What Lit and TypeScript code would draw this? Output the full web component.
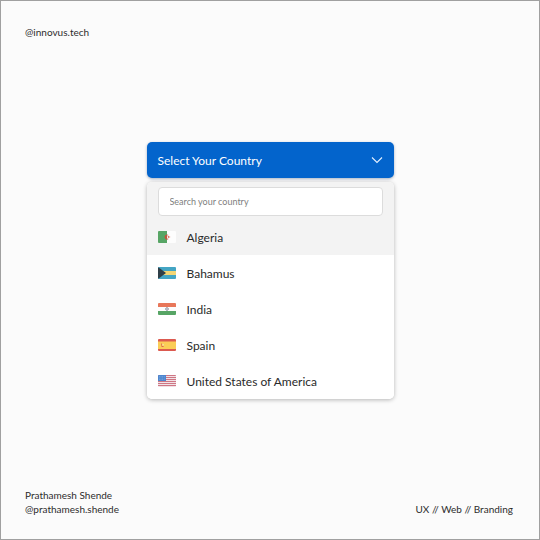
import { LitElement, html, svg, css, nothing } from "lit";
import { customElement, state } from "lit/decorators.js";
import { classMap } from "lit/directives/class-map.js";

const stripes = [0, 2, 4, 6, 8, 10];

const flags = {
  dz: svg`
    <rect width="9" height="12" fill="#57a565"/>
    <rect x="9" width="9" height="12" fill="#fdfdfd"/>
    <path d="M10.6 4A2.5 2.5 0 1 0 10.6 8A2 2 0 1 1 10.6 4Z" fill="#c8503c"/>
    <path d="M12.6 6L11 6.5L10.5 7.6L10.2 6.3L9 6L10.2 5.6L10.5 4.4L11 5.5Z" fill="#d8523e"/>`,
  bs: svg`
    <rect width="18" height="12" fill="#43a5c4"/>
    <rect y="4" width="18" height="4" fill="#f3d675"/>
    <path d="M0 0L8 6L0 12Z" fill="#2f3f48"/>`,
  in: svg`
    <rect width="18" height="12" fill="#fdfdfd"/>
    <rect width="18" height="4" fill="#e8775a"/>
    <rect y="8" width="18" height="4" fill="#57a565"/>
    <circle cx="9" cy="6" r="1.3" fill="none" stroke="#6d7488" stroke-width=".8"/>`,
  es: svg`
    <rect width="18" height="12" fill="#dc5a50"/>
    <rect y="2.5" width="18" height="7.5" fill="#fbcd57"/>
    <path d="M3 4.5H4V7H5.6V8H3.6Z" fill="#dc6a50"/>
    <path d="M4.5 5H5.8V6.5H4.5Z" fill="#f3e3b4"/>`,
  us: svg`
    <rect width="18" height="12" fill="#f0e2e6"/>
    ${stripes.map((y) => svg`<rect y=${y} width="18" height="1" fill="#cf7684"/>`)}
    <rect width="8" height="6" fill="#4d86cf"/>
    <path d="M1 1.5H7M1 3H7M1 4.5H7" stroke="#8fb5e4" stroke-width=".6" stroke-dasharray=".8 .8"/>`,
};

interface Country {
  code: keyof typeof flags;
  name: string;
}

const countries: Country[] = [
  { code: "dz", name: "Algeria" },
  { code: "bs", name: "Bahamus" },
  { code: "in", name: "India" },
  { code: "es", name: "Spain" },
  { code: "us", name: "United States of America" },
];

@customElement("country-select")
export class CountrySelect extends LitElement {
  @state() private open = true;
  @state() private query = "";
  @state() private active = "dz";
  @state() private chosen = "";

  static styles = css`
    :host {
      display: block;
    }
    * {
      box-sizing: border-box;
    }
    button,
    input {
      font: inherit;
      margin: 0;
    }
    .trigger {
      display: flex;
      align-items: center;
      justify-content: space-between;
      width: 100%;
      height: 36px;
      padding: 0 11px;
      border: 0;
      border-radius: 5px;
      background: #0364cc;
      color: #fff;
      box-shadow: 0 1px 3px rgba(0, 40, 90, 0.35);
      cursor: pointer;
    }
    .chevron {
      width: 12px;
      height: 8px;
    }
    .panel {
      margin-top: 4px;
      border-radius: 5px;
      background: #fff;
      overflow: hidden;
      box-shadow: 0 1px 4px rgba(0, 0, 0, 0.28);
    }
    .search {
      padding: 5px 11px 3px;
      background: #f3f3f3;
    }
    .field {
      display: block;
      width: 100%;
      height: 29px;
      padding: 0 11px;
      border: 1px solid #dcdcdc;
      border-radius: 4px;
      background: #fff;
      color: #333;
      font-size: 9px;
    }
    .field::placeholder {
      color: #808080;
      opacity: 1;
    }
    .list {
      margin: 0;
      padding: 0;
      list-style: none;
    }
    .option {
      display: flex;
      align-items: center;
      gap: 11px;
      width: 100%;
      height: 36px;
      padding: 0 11px;
      border: 0;
      background: #fff;
      color: #2a2a2a;
      cursor: pointer;
    }
    .label {
      padding-top: 2px;
    }
    .option.active {
      background: #f3f3f3;
    }
    .flag {
      width: 18px;
      height: 12px;
      border-radius: 1px;
    }
  `;

  private choose(country: Country) {
    this.chosen = country.name;
    this.open = false;
  }

  render() {
    const shown = countries.filter((c) => c.name.toLowerCase().includes(this.query.toLowerCase()));
    return html`
      <button class="trigger" aria-expanded=${this.open} @click=${() => (this.open = !this.open)}>
        <span class="label">${this.chosen || "Select Your Country"}</span>
        <svg class="chevron" viewBox="0 0 12 8" aria-hidden="true">
          <path d="M1 1.5L6 6.5L11 1.5" fill="none" stroke="#e4f0ff" stroke-width="1.1" />
        </svg>
      </button>
      ${this.open
        ? html`<div class="panel">
            <div class="search">
              <input
                class="field"
                type="text"
                aria-label="Search your country"
                placeholder="Search your country"
                .value=${this.query}
                @input=${(e: Event) => (this.query = (e.target as HTMLInputElement).value)}
              />
            </div>
            <ul class="list">
              ${shown.map(
                (c) => html`<li>
                  <button
                    class=${classMap({ option: true, active: c.code === this.active })}
                    @mouseenter=${() => (this.active = c.code)}
                    @click=${() => this.choose(c)}
                  >
                    <svg class="flag" viewBox="0 0 18 12" aria-hidden="true">${flags[c.code]}</svg>
                    <span class="label">${c.name}</span>
                  </button>
                </li>`
              )}
            </ul>
          </div>`
        : nothing}
    `;
  }
}

@customElement("app-root")
export class AppRoot extends LitElement {
  static styles = css`
    :host {
      display: grid;
      grid-template-rows: 1fr auto 1fr;
      box-sizing: border-box;
      min-height: 100vh;
      padding: 24px 24px 23px;
      border: 1px solid #a0a0a0;
      background: #fbfbfb;
      color: #2c2c2c;
      font-family: Lato, "Open Sans", sans-serif;
      font-size: 10px;
      line-height: 14px;
    }
    .picker {
      width: 50%;
      min-width: 247px;
      justify-self: center;
      font-size: 12px;
    }
    .footer {
      display: flex;
      align-items: flex-end;
      justify-content: space-between;
      align-self: end;
      padding-right: 2px;
    }
    .line {
      margin: 0;
    }
  `;

  render() {
    return html`
      <header><p class="line">@innovus.tech</p></header>
      <country-select class="picker"></country-select>
      <footer class="footer">
        <div>
          <p class="line">Prathamesh Shende</p>
          <p class="line">@prathamesh.shende</p>
        </div>
        <p class="line">UX // Web // Branding</p>
      </footer>
    `;
  }
}
